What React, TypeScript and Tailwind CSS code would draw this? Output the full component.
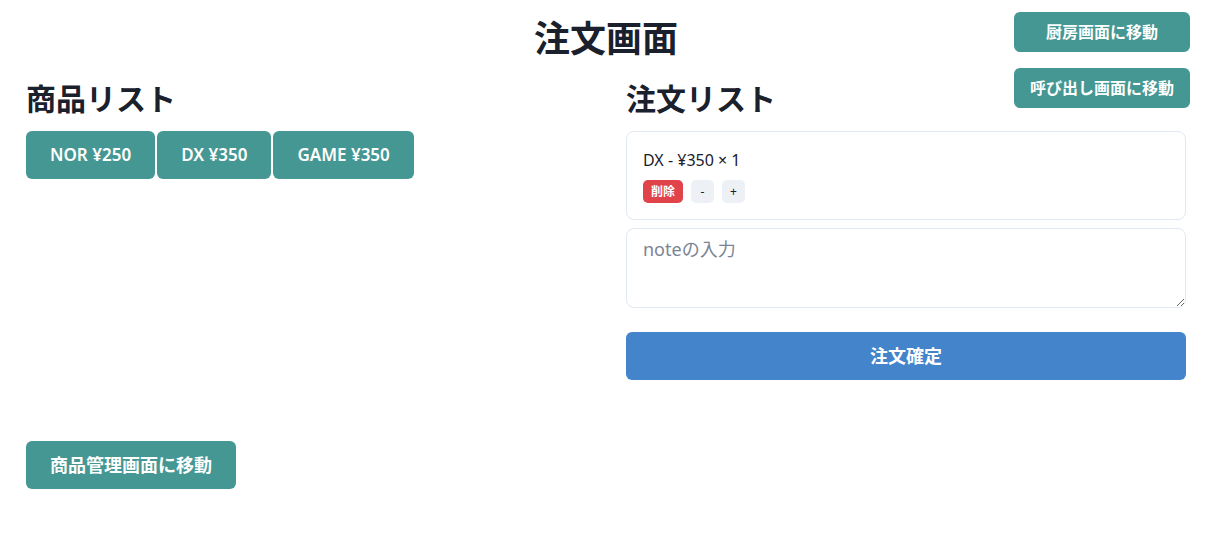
import React, { useState } from 'react';

type Product = { id: string; name: string; price: number };

const products: Product[] = [
  { id: 'nor', name: 'NOR', price: 250 },
  { id: 'dx', name: 'DX', price: 350 },
  { id: 'game', name: 'GAME', price: 350 },
];

const font = { fontFamily: '"Noto Sans", "Noto Sans CJK JP", sans-serif' };

export default function App() {
  const [order, setOrder] = useState<{ product: Product; qty: number }[]>([
    { product: products[1], qty: 1 },
  ]);
  const [note, setNote] = useState('');

  const add = (p: Product) => {
    setOrder((o) => {
      const found = o.find((x) => x.product.id === p.id);
      if (found) return o.map((x) => (x.product.id === p.id ? { ...x, qty: x.qty + 1 } : x));
      return [...o, { product: p, qty: 1 }];
    });
  };

  const change = (id: string, d: number) => {
    setOrder((o) =>
      o.map((x) => (x.product.id === id ? { ...x, qty: Math.max(1, x.qty + d) } : x))
    );
  };

  return (
    <div className="relative min-h-screen bg-white pl-[26px] pr-[22px] text-[#1a202c]" style={font}>
      {/* nav buttons */}
      <div className="absolute right-[18px] top-[12px] flex flex-col gap-4">
        <button className="h-10 w-[176px] rounded-md bg-[#459793] text-[16px] font-bold text-white">
          厨房画面に移動
        </button>
        <button className="h-10 w-[176px] rounded-md bg-[#459793] text-[16px] font-bold text-white">
          呼び出し画面に移動
        </button>
      </div>

      <h1 className="pt-[17px] text-center text-[36px] font-bold leading-[44px]">注文画面</h1>

      <div className="mt-[20px] grid grid-cols-2 gap-10">
        {/* products */}
        <section>
          <h2 className="text-[30px] font-bold leading-[36px]">商品リスト</h2>
          <div className="mt-[14px] flex gap-[2px]">
            {products.map((p) => (
              <button
                key={p.id}
                onClick={() => add(p)}
                className="h-12 rounded-md bg-[#459793] px-6 text-[17px] font-semibold text-white"
              >
                {p.name} ¥{p.price}
              </button>
            ))}
          </div>
        </section>

        {/* order list */}
        <section>
          <h2 className="text-[30px] font-bold leading-[36px]">注文リスト</h2>
          <div className="mt-[14px] flex flex-col gap-2">
            {order.map((x) => (
              <div key={x.product.id} className="rounded-lg border border-[#e2e8f0] p-4">
                <div className="text-[16px] leading-[24px]">
                  {x.product.name} - ¥{x.product.price} × {x.qty}
                </div>
                <div className="mt-2 flex gap-2">
                  <button
                    onClick={() => setOrder((o) => o.filter((y) => y.product.id !== x.product.id))}
                    className="h-[23px] rounded-[5px] bg-[#e0434a] px-2 text-[12px] font-bold text-white"
                  >
                    削除
                  </button>
                  <button
                    onClick={() => change(x.product.id, -1)}
                    className="h-[23px] w-[23px] rounded-[5px] bg-[#edf0f5] text-[12px]"
                  >
                    -
                  </button>
                  <button
                    onClick={() => change(x.product.id, 1)}
                    className="h-[23px] w-[23px] rounded-[5px] bg-[#edf0f5] text-[12px]"
                  >
                    +
                  </button>
                </div>
              </div>
            ))}
            <textarea
              value={note}
              onChange={(e) => setNote(e.target.value)}
              placeholder="noteの入力"
              className="h-[80px] w-full rounded-lg border border-[#e2e8f0] px-4 py-[6px] text-[18px] leading-[28px] placeholder:text-[#7b8494] focus:outline-none"
            />
          </div>
          <button className="mt-6 h-12 w-full rounded-md bg-[#4484ca] text-[18px] font-bold text-white">
            注文確定
          </button>
        </section>
      </div>

      <button className="mt-[61px] h-12 rounded-md bg-[#459793] px-6 text-[18px] font-bold text-white">
        商品管理画面に移動
      </button>
    </div>
  );
}
